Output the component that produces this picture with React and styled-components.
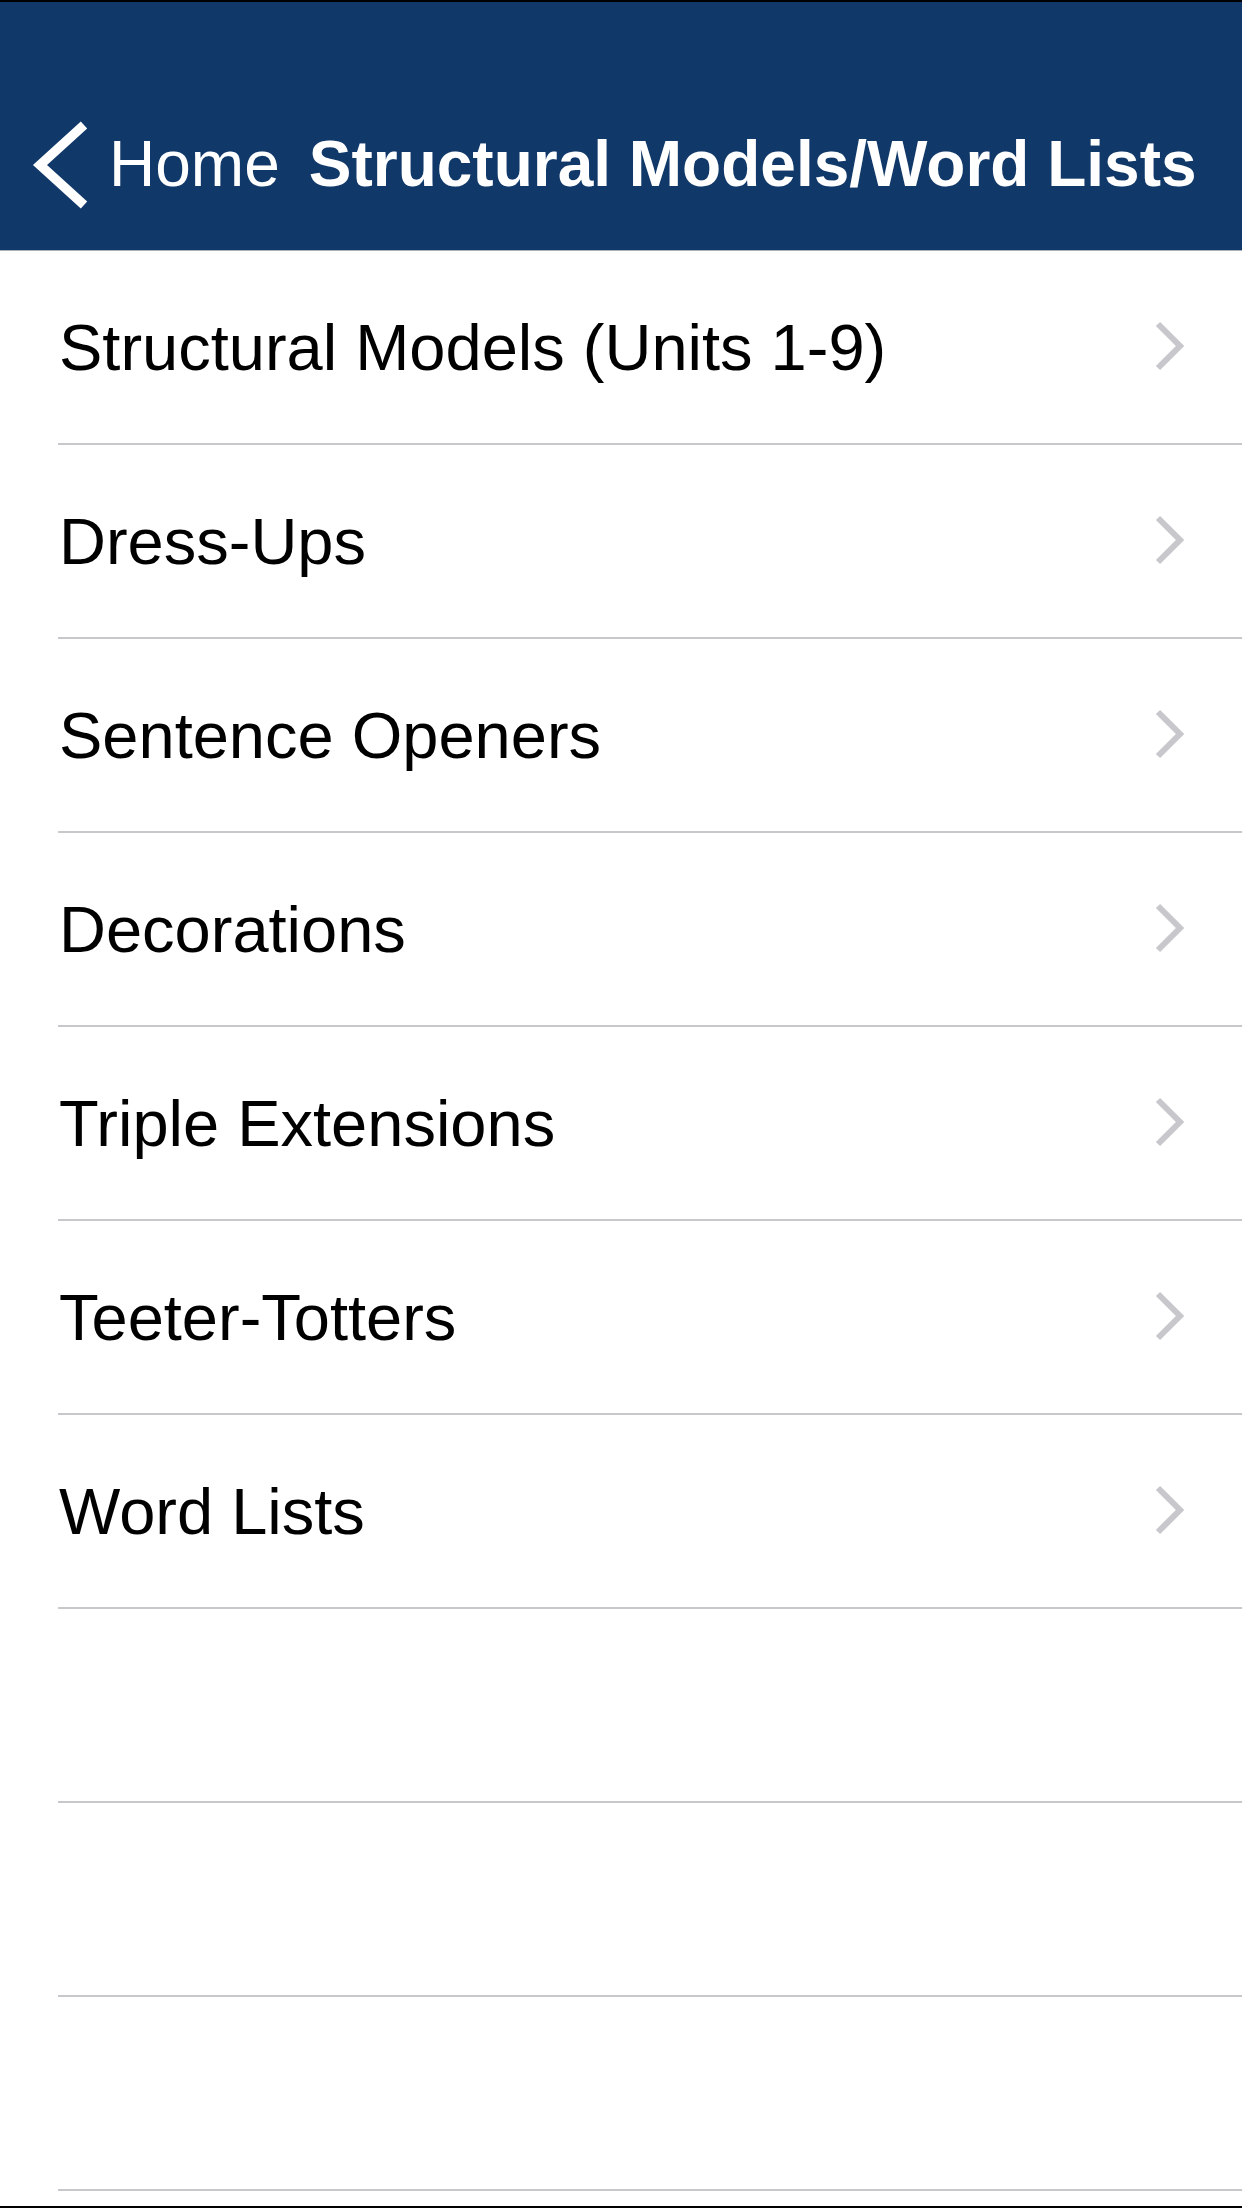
import React from 'react';
import styled, { createGlobalStyle } from 'styled-components';

const GlobalStyle = createGlobalStyle`
  html, body {
    margin: 0;
    padding: 0;
    background: #ffffff;
  }
  * {
    box-sizing: border-box;
  }
`;

const Screen = styled.div`
  width: 1242px;
  height: 2208px;
  display: flex;
  flex-direction: column;
  background: #ffffff;
  border-top: 2px solid #000000;
  border-bottom: 2px solid #000000;
  font-family: 'Liberation Sans', Arial, Helvetica, sans-serif;
  overflow: hidden;
`;

const NavBar = styled.header`
  height: 249px;
  flex-shrink: 0;
  background: #103869;
  border-bottom: 1px solid #a9b0b8;
  display: flex;
  align-items: flex-start;
  padding: 130px 0 0 28px;
  color: #ffffff;
  font-size: 64px;
  line-height: 64px;
  white-space: nowrap;
`;

const BackButton = styled.div`
  display: flex;
  align-items: center;
  height: 64px;
`;

const BackLabel = styled.span`
  font-weight: 400;
  margin-left: 21px;
`;

const Title = styled.span`
  font-weight: 700;
  margin-left: 29px;
`;

const List = styled.ul`
  list-style: none;
  margin: 0;
  padding: 0;
`;

const Row = styled.li`
  height: 194px;
  display: flex;
  flex-direction: column;
`;

const RowBody = styled.div`
  flex: 1;
  display: flex;
  align-items: center;
  justify-content: space-between;
  padding: 0 57px 0 59px;
  font-size: 65px;
  color: #000000;
`;

const Separator = styled.div`
  height: 2px;
  margin-left: 58px;
  background: #c8c7cc;
`;

const BackChevron = () => (
  <svg width="60" height="88" viewBox="0 0 60 88" style={{ display: 'block', marginTop: '2px' }}>
    <polyline
      points="56,4 12,44 56,84"
      fill="none"
      stroke="#ffffff"
      strokeWidth="9.5"
      strokeLinejoin="miter"
    />
  </svg>
);

const Disclosure = () => (
  <svg width="32" height="52" viewBox="0 0 32 52" style={{ display: 'block' }}>
    <polyline
      points="5,3 27,25 5,47"
      fill="none"
      stroke="#c7c7cc"
      strokeWidth="6"
      strokeLinejoin="miter"
    />
  </svg>
);

const items = [
  'Structural Models (Units 1-9)',
  'Dress-Ups',
  'Sentence Openers',
  'Decorations',
  'Triple Extensions',
  'Teeter-Totters',
  'Word Lists',
  null,
  null,
  null,
];

export default function App() {
  return (
    <>
      <GlobalStyle />
      <Screen>
        <NavBar>
          <BackButton>
            <BackChevron />
            <BackLabel>Home</BackLabel>
          </BackButton>
          <Title>Structural Models/Word Lists</Title>
        </NavBar>
        <List>
          {items.map((label, i) => (
            <Row key={i}>
              <RowBody>
                {label && <span>{label}</span>}
                {label && <Disclosure />}
              </RowBody>
              <Separator />
            </Row>
          ))}
        </List>
      </Screen>
    </>
  );
}
